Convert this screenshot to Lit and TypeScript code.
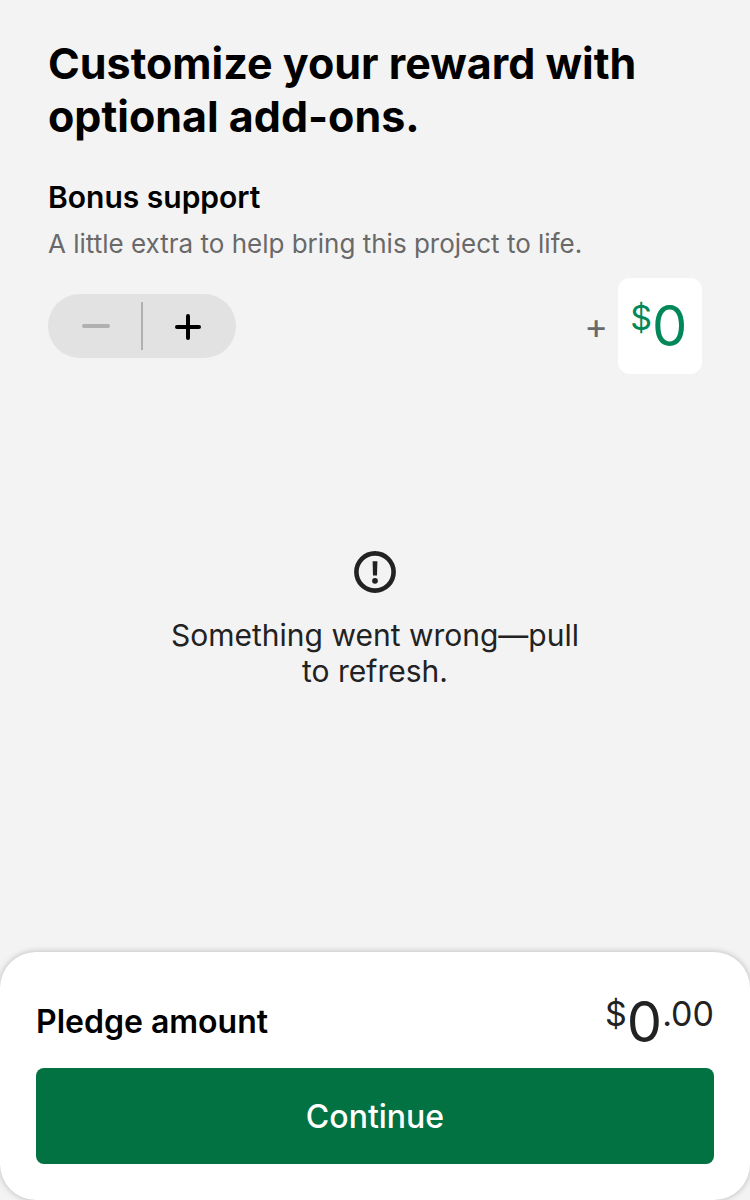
import { LitElement, html, css } from "lit";
import { customElement, state } from "lit/decorators.js";

@customElement("app-root")
export class AppRoot extends LitElement {
  @state() private bonus = 0;

  static styles = css`
    :host {
      display: flex;
      flex-direction: column;
      min-height: 100vh;
      background: #f3f3f3;
      color: #000;
      font-family: Inter, "Liberation Sans", sans-serif;
    }
    * { box-sizing: border-box; }
    h1, h2, p { margin: 0; }
    button, input { font: inherit; border: 0; padding: 0; margin: 0; }
    .content { padding: 37px 48px 0; }
    h1 { font-size: 43px; line-height: 53px; font-weight: 700; }
    h2 { font-size: 30px; line-height: 36px; font-weight: 600; }
    .bonus { margin-top: 36px; }
    .hint { margin-top: 13px; font-size: 26px; line-height: 32px; color: #696969; }
    .controls { display: flex; align-items: center; justify-content: space-between; margin-top: 18px; }
    .stepper { display: flex; align-items: center; height: 64px; width: 188px; padding: 0 1px; border-radius: 32px; background: #e2e2e2; }
    .step { flex: 1; height: 64px; display: flex; align-items: center; justify-content: center; background: none; color: #000; }
    .step:disabled { color: #b0b0b2; }
    .divider { width: 2px; height: 48px; background: #b0b0b2; }
    .amount { display: flex; align-items: center; gap: 10px; }
    .plus { font-size: 36px; line-height: 40px; color: #696969; }
    .field { display: flex; align-items: flex-start; height: 96px; padding: 16px 12px; border-radius: 12px; background: #fff; color: #028858; }
    .symbol { font-size: 34px; line-height: 48px; }
    .value { width: 38px; height: 64px; font-size: 56px; line-height: 64px; color: inherit; background: none; outline: none; }
    .error { flex: 1; display: flex; flex-direction: column; align-items: center; padding: 177px 48px 48px; text-align: center; color: #222; }
    .error p { max-width: 440px; margin-top: 24px; font-size: 30px; line-height: 36px; }
    .sheet { padding: 36px; border-radius: 36px; background: #fff; box-shadow: 0 0 6px rgba(0, 0, 0, 0.25); clip-path: inset(-12px 0 0 0); }
    .total { display: flex; align-items: center; justify-content: space-between; height: 68px; margin-bottom: 12px; }
    .total h2 { font-size: 32px; }
    .sum { display: flex; align-items: flex-start; color: #222; }
    .sum small { font-size: 34px; line-height: 52px; }
    .sum span { font-size: 56px; line-height: 68px; }
    .continue { display: block; width: 100%; height: 96px; border-radius: 8px; background: #037242; color: #fff; font-size: 32px; font-weight: 500; }
  `;

  render() {
    return html`
      <main class="content">
        <h1>Customize your reward with optional add-ons.</h1>
        <h2 class="bonus"><label for="bonus">Bonus support</label></h2>
        <p class="hint">A little extra to help bring this project to life.</p>
        <div class="controls">
          <div class="stepper">
            <button class="step" aria-label="Decrease bonus" ?disabled=${this.bonus === 0} @click=${() => this.bonus--}>
              <svg width="30" height="30" viewBox="0 0 30 30"><path d="M4 15H28" stroke="currentColor" stroke-width="4" stroke-linecap="round" /></svg>
            </button>
            <span class="divider"></span>
            <button class="step" aria-label="Increase bonus" @click=${() => this.bonus++}>
              <svg width="30" height="30" viewBox="0 0 30 30"><path d="M3 16H25M14 5V27" stroke="currentColor" stroke-width="4" stroke-linecap="round" /></svg>
            </button>
          </div>
          <div class="amount">
            <span class="plus">+</span>
            <div class="field">
              <span class="symbol">$</span>
              <input id="bonus" class="value" inputmode="numeric" .value=${String(this.bonus)} @change=${(e: Event) => (this.bonus = Math.max(0, Number((e.target as HTMLInputElement).value) || 0))} />
            </div>
          </div>
        </div>
      </main>
      <section class="error" role="alert">
        <svg width="42" height="42" viewBox="0 0 42 42" fill="currentColor">
          <circle cx="21" cy="21" r="18.6" fill="none" stroke="currentColor" stroke-width="4.6" />
          <path d="M18.6 10.2H23.4L23 24.4H19Z" />
          <circle cx="21" cy="29.8" r="2.9" />
        </svg>
        <p>Something went wrong—pull to refresh.</p>
      </section>
      <footer class="sheet">
        <div class="total">
          <h2>Pledge amount</h2>
          <div class="sum"><small>$</small><span>${this.bonus}</span><small>.00</small></div>
        </div>
        <button class="continue">Continue</button>
      </footer>
    `;
  }
}
